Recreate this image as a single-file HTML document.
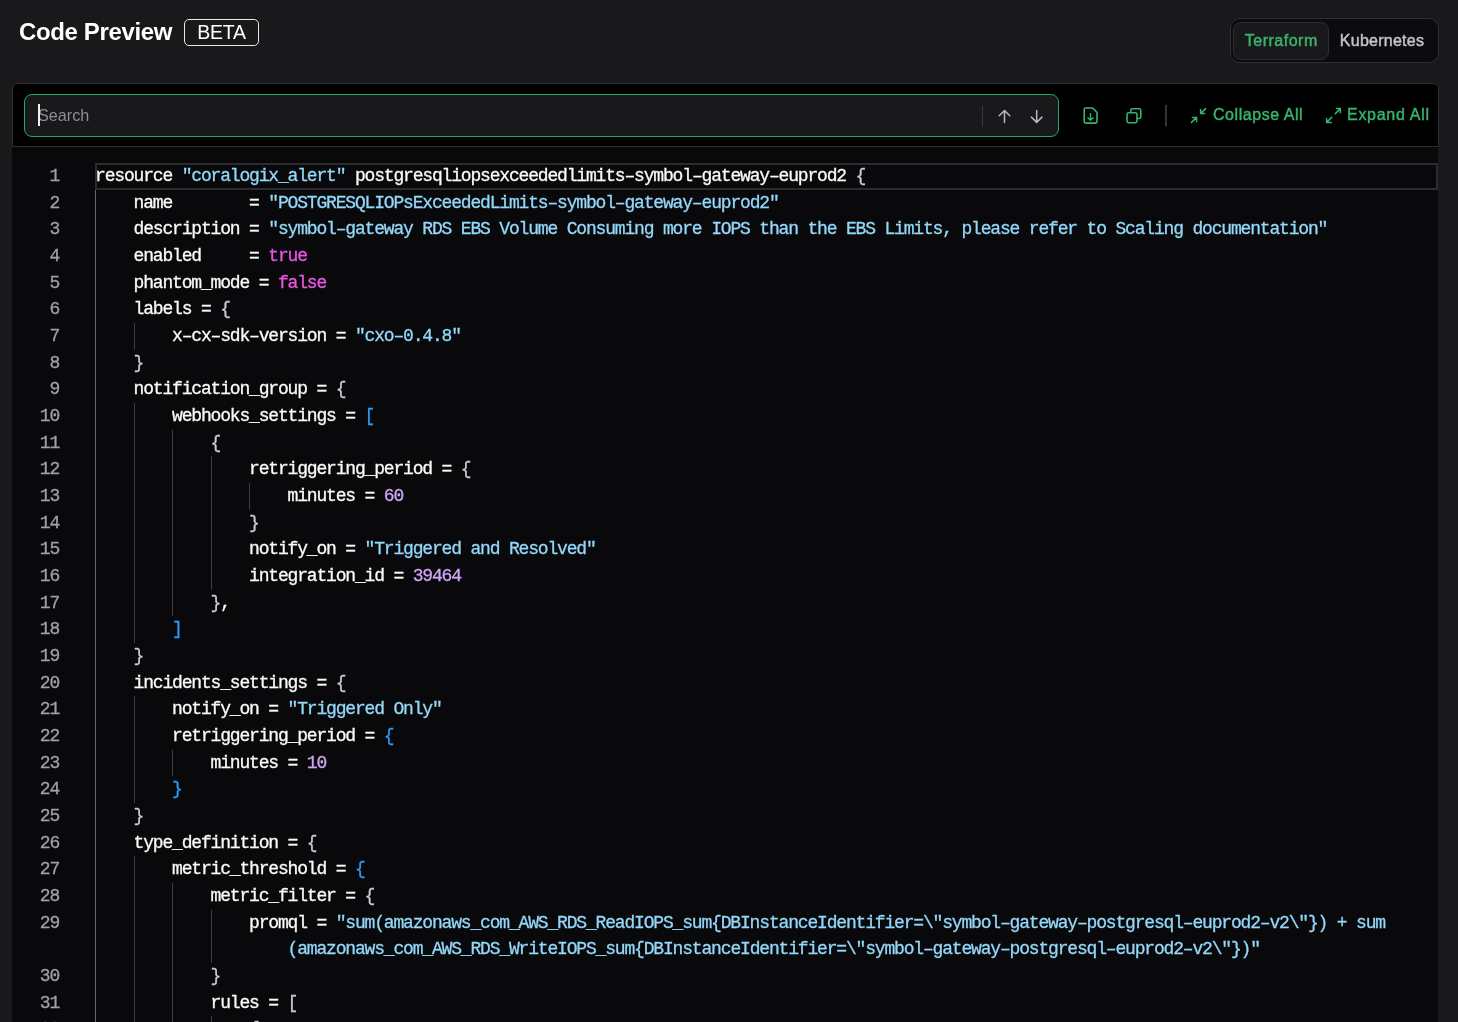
<!DOCTYPE html>
<html><head><meta charset="utf-8">
<style>
*{box-sizing:border-box;margin:0;padding:0}
body>*{will-change:transform}
html,body{width:1458px;height:1022px;overflow:hidden;background:#19191b;font-family:"Liberation Sans",sans-serif;position:relative}
.title{position:absolute;left:19px;top:18px;font-size:24px;font-weight:bold;color:#fff;letter-spacing:-0.37px;line-height:28px}
.beta{position:absolute;left:184px;top:19px;width:75px;height:27px;border:1px solid #e8e8e8;border-radius:5px;color:#fff;font-size:19.5px;text-align:center;line-height:25px;letter-spacing:-0.2px}
.seg{position:absolute;left:1230px;top:18px;width:209px;height:45px;border:1px solid #303033;border-radius:10px;background:#0c0c0e}
.seg .on{position:absolute;left:2px;top:3px;width:96px;height:38px;border:1px solid #2e2e31;border-radius:8px;background:#19191b;color:#3db36b;font-size:16px;font-weight:normal;-webkit-text-stroke:0.45px currentColor;text-align:center;line-height:36px;letter-spacing:0.5px;text-indent:0.5px}
.seg .off{position:absolute;left:96.5px;top:3px;width:109px;height:38px;color:#c4c4c8;font-size:16px;font-weight:normal;-webkit-text-stroke:0.45px currentColor;text-align:center;line-height:38px;letter-spacing:0.25px}
.panel{position:absolute;left:12px;top:83px;width:1427px;height:64px;background:#000;border:1px solid #2f2f32;border-radius:6px 6px 0 0}
.search{position:absolute;left:24px;top:94px;width:1035px;height:43px;border:1px solid #2aa763;border-radius:8px;background:#19191b}
.search .ph{position:absolute;left:13px;top:9.5px;font-size:16.2px;color:#8e8e93;line-height:20px}
.search .caret{position:absolute;left:13px;top:9px;width:2px;height:22px;background:#f0f0f0}
.search .sep{position:absolute;left:957px;top:11px;width:1px;height:21px;background:#3a3a3d}
.code{position:absolute;left:12px;top:147px;width:1426px;height:875px;background:#09090b}
.ln{position:absolute;left:0;width:60px;-webkit-text-stroke:0.3px currentColor;padding-right:1px;text-align:right;font-family:"Liberation Mono",monospace;font-size:18px;letter-spacing:-1.2px;line-height:26.67px;height:26.67px;color:#a0a0a5}
.cl{position:absolute;left:95px;white-space:pre;-webkit-text-stroke:0.3px currentColor;font-family:"Liberation Mono",monospace;font-size:18px;letter-spacing:-1.175px;line-height:26.67px;height:26.67px;color:#fafafa}
.w{color:#c8ccd4}.s{color:#93d8fa}.k{color:#ee55e4}.n{color:#cfa6f6}.b{color:#2a9cf8}
.g{position:absolute;width:1px;background:#3e3e42}.g0{background:#66666a}
.cur{position:absolute;left:95px;top:163px;width:1343px;height:27px;border:2px solid #2c2c2e}
.tb{position:absolute;color:#36b46c;font-size:16px;font-weight:normal;-webkit-text-stroke:0.45px currentColor;line-height:20px;letter-spacing:0.3px}
svg.ov{position:absolute;left:0;top:0}
</style></head><body>
<div class="title">Code Preview</div>
<div class="beta">BETA</div>
<div class="seg"><div class="on">Terraform</div><div class="off">Kubernetes</div></div>
<div class="panel"></div>
<div class="search"><div class="ph">Search</div><div class="caret"></div><div class="sep"></div>
</div>
<div class="code"></div>
<div class="cur"></div>
<div style="position:absolute;left:0;top:0;width:1458px;height:1022px;will-change:transform"><div class="g g0" style="left:95px;top:189.67px;height:853.33px"></div><div class="g" style="left:134px;top:323.00px;height:26.67px"></div><div class="g" style="left:134px;top:403.00px;height:240.00px"></div><div class="g" style="left:134px;top:696.33px;height:106.67px"></div><div class="g" style="left:134px;top:856.33px;height:186.67px"></div><div class="g" style="left:172px;top:429.67px;height:186.67px"></div><div class="g" style="left:172px;top:749.67px;height:26.67px"></div><div class="g" style="left:172px;top:883.00px;height:160.00px"></div><div class="g" style="left:211px;top:456.33px;height:133.33px"></div><div class="g" style="left:211px;top:909.67px;height:53.33px"></div><div class="g" style="left:211px;top:1016.33px;height:26.67px"></div><div class="g" style="left:249px;top:483.00px;height:26.67px"></div>
<div class="ln" style="top:163.00px">1</div><div class="cl" style="top:163.00px">resource <span class="s">&quot;coralogix_alert&quot;</span> postgresqliopsexceededlimits–symbol–gateway–euprod2 <span class="w">{</span></div>
<div class="ln" style="top:189.67px">2</div><div class="cl" style="top:189.67px">    name        = <span class="s">&quot;POSTGRESQLIOPsExceededLimits–symbol–gateway–euprod2&quot;</span></div>
<div class="ln" style="top:216.33px">3</div><div class="cl" style="top:216.33px">    description = <span class="s">&quot;symbol–gateway RDS EBS Volume Consuming more IOPS than the EBS Limits, please refer to Scaling documentation&quot;</span></div>
<div class="ln" style="top:243.00px">4</div><div class="cl" style="top:243.00px">    enabled     = <span class="k">true</span></div>
<div class="ln" style="top:269.67px">5</div><div class="cl" style="top:269.67px">    phantom_mode = <span class="k">false</span></div>
<div class="ln" style="top:296.33px">6</div><div class="cl" style="top:296.33px">    labels = <span class="w">{</span></div>
<div class="ln" style="top:323.00px">7</div><div class="cl" style="top:323.00px">        x–cx–sdk–version = <span class="s">&quot;cxo–0.4.8&quot;</span></div>
<div class="ln" style="top:349.67px">8</div><div class="cl" style="top:349.67px">    <span class="w">}</span></div>
<div class="ln" style="top:376.33px">9</div><div class="cl" style="top:376.33px">    notification_group = <span class="w">{</span></div>
<div class="ln" style="top:403.00px">10</div><div class="cl" style="top:403.00px">        webhooks_settings = <span class="b">[</span></div>
<div class="ln" style="top:429.67px">11</div><div class="cl" style="top:429.67px">            <span class="w">{</span></div>
<div class="ln" style="top:456.33px">12</div><div class="cl" style="top:456.33px">                retriggering_period = <span class="w">{</span></div>
<div class="ln" style="top:483.00px">13</div><div class="cl" style="top:483.00px">                    minutes = <span class="n">60</span></div>
<div class="ln" style="top:509.67px">14</div><div class="cl" style="top:509.67px">                <span class="w">}</span></div>
<div class="ln" style="top:536.33px">15</div><div class="cl" style="top:536.33px">                notify_on = <span class="s">&quot;Triggered and Resolved&quot;</span></div>
<div class="ln" style="top:563.00px">16</div><div class="cl" style="top:563.00px">                integration_id = <span class="n">39464</span></div>
<div class="ln" style="top:589.67px">17</div><div class="cl" style="top:589.67px">            <span class="w">}</span>,</div>
<div class="ln" style="top:616.33px">18</div><div class="cl" style="top:616.33px">        <span class="b">]</span></div>
<div class="ln" style="top:643.00px">19</div><div class="cl" style="top:643.00px">    <span class="w">}</span></div>
<div class="ln" style="top:669.67px">20</div><div class="cl" style="top:669.67px">    incidents_settings = <span class="w">{</span></div>
<div class="ln" style="top:696.33px">21</div><div class="cl" style="top:696.33px">        notify_on = <span class="s">&quot;Triggered Only&quot;</span></div>
<div class="ln" style="top:723.00px">22</div><div class="cl" style="top:723.00px">        retriggering_period = <span class="b">{</span></div>
<div class="ln" style="top:749.67px">23</div><div class="cl" style="top:749.67px">            minutes = <span class="n">10</span></div>
<div class="ln" style="top:776.33px">24</div><div class="cl" style="top:776.33px">        <span class="b">}</span></div>
<div class="ln" style="top:803.00px">25</div><div class="cl" style="top:803.00px">    <span class="w">}</span></div>
<div class="ln" style="top:829.67px">26</div><div class="cl" style="top:829.67px">    type_definition = <span class="w">{</span></div>
<div class="ln" style="top:856.33px">27</div><div class="cl" style="top:856.33px">        metric_threshold = <span class="b">{</span></div>
<div class="ln" style="top:883.00px">28</div><div class="cl" style="top:883.00px">            metric_filter = <span class="w">{</span></div>
<div class="ln" style="top:909.67px">29</div><div class="cl" style="top:909.67px">                promql = <span class="s">&quot;sum(amazonaws_com_AWS_RDS_ReadIOPS_sum{DBInstanceIdentifier=\&quot;symbol–gateway–postgresql–euprod2–v2\&quot;}) + sum</span></div>
<div class="ln" style="top:936.33px"></div><div class="cl" style="top:936.33px">                    <span class="s">(amazonaws_com_AWS_RDS_WriteIOPS_sum{DBInstanceIdentifier=\&quot;symbol–gateway–postgresql–euprod2–v2\&quot;})&quot;</span></div>
<div class="ln" style="top:963.00px">30</div><div class="cl" style="top:963.00px">            <span class="w">}</span></div>
<div class="ln" style="top:989.67px">31</div><div class="cl" style="top:989.67px">            rules = <span class="w">[</span></div>
<div class="ln" style="top:1016.33px">32</div><div class="cl" style="top:1016.33px">                <span class="w">{</span></div></div>
<div class="tb" style="left:1213px;top:105px;letter-spacing:0.55px">Collapse All</div>
<div class="tb" style="left:1347px;top:105px;letter-spacing:0.72px">Expand All</div>
<svg class="ov" width="1458" height="1022" viewBox="0 0 1458 1022" fill="none" stroke-linecap="round" stroke-linejoin="round">
<g stroke="#b9b9bd" stroke-width="1.5">
<path d="M1004.5 110.5V122.4M999.2 115.8L1004.5 110.5L1009.8 115.8"/>
<path d="M1036.7 110.5V122.4M1031.4 117.1L1036.7 122.4L1042 117.1"/>
</g>
<g stroke="#33b46b" stroke-width="1.6">
<path d="M1085.7 108H1092.6L1097 112.4V121.6A1.5 1.5 0 0 1 1095.5 123.1H1085.7A1.5 1.5 0 0 1 1084.2 121.6V109.5A1.5 1.5 0 0 1 1085.7 108Z"/>
<path d="M1090.5 113.8V120.3M1087.9 117.7L1090.5 120.3L1093.1 117.7" stroke-width="1.4"/>
<rect x="1127" y="112.8" width="10" height="9.9" rx="1.6"/>
<path d="M1130.8 112.6V110.4A1.6 1.6 0 0 1 1132.4 108.8H1139.2A1.6 1.6 0 0 1 1140.8 110.4V116.9A1.6 1.6 0 0 1 1139.2 118.5H1137.2"/>
</g>
<g stroke="#33b46b" stroke-width="1.5">
<path d="M1205.6 108.6L1200.6 113.5M1200.6 109.4V113.5H1204.7"/>
<path d="M1191.5 122.4L1196.6 117.4M1192.4 117.4H1196.6V121.5"/>
<path d="M1340.4 108.6L1335.4 113.6M1336.4 108.6H1340.4V112.7"/>
<path d="M1326.6 122.4L1331.7 117.4M1326.6 118.4V122.4H1331.3"/>
</g>
<path d="M1166 105.5V126" stroke="#444447" stroke-width="1.5"/>
</svg>
</body></html>
